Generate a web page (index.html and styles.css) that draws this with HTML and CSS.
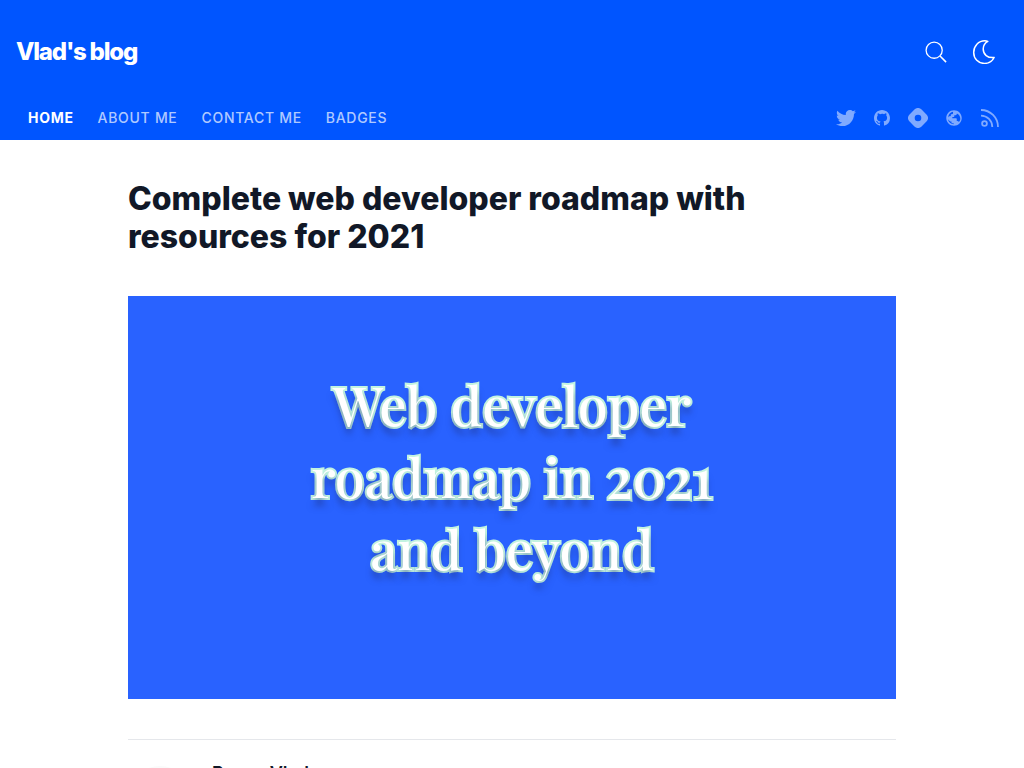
FILE: index.html
```html
<!DOCTYPE html>
<html lang="en">
<head>
<meta charset="utf-8">
<meta name="viewport" content="width=device-width, initial-scale=1">
<title>Complete web developer roadmap with resources for 2021</title>
<link rel="stylesheet" href="styles.css">
</head>
<body>
<header class="header">
  <div class="topbar">
    <a class="brand" href="#">Vlad's blog</a>
    <div class="actions">
      <button class="icon-button" type="button" aria-label="Search">
        <svg class="icon-search" viewBox="0 0 24 24" fill="none" stroke="currentColor" stroke-width="1.4"><circle cx="10" cy="10" r="8.8"/><path d="M16.400 16.400l6.600 6.600" stroke-width="1.7"/></svg>
      </button>
      <button class="icon-button" type="button" aria-label="Toggle theme">
        <svg class="icon-moon" viewBox="0 0 24 24" fill="none" stroke="currentColor" stroke-width="1.5" stroke-linejoin="round"><path d="M15.800 1.400C14.800.9 13.900.8 12.800.8 6.500.8 1.700 6 1.700 12.400c0 6.200 4.600 11 10.700 11 4.200 0 7.900-2.200 9.700-5.900C15.500 18.200 11.200 14.500 11.200 9c0-3.200 1.700-5.900 4.600-7.600z"/></svg>
      </button>
    </div>
  </div>
  <div class="navbar">
    <nav class="nav">
      <a class="nav-link active" href="#">Home</a>
      <a class="nav-link" href="#">About me</a>
      <a class="nav-link" href="#">Contact me</a>
      <a class="nav-link" href="#">Badges</a>
    </nav>
    <div class="social">
      <a class="social-link" href="#" aria-label="Twitter"><svg class="icon-large" viewBox="0 0 512 512"><path d="M459.37 151.716c.325 4.548.325 9.097.325 13.645 0 138.720-105.583 298.558-298.558 298.558-59.452 0-114.680-17.219-161.137-47.106 8.447.974 16.568 1.299 25.340 1.299 49.055 0 94.213-16.568 130.274-44.832-46.132-.975-84.792-31.188-98.112-72.772 6.498.974 12.995 1.624 19.818 1.624 9.421 0 18.843-1.300 27.614-3.573-48.081-9.747-84.143-51.980-84.143-102.985v-1.299c13.969 7.797 30.214 12.670 47.431 13.319-28.264-18.843-46.781-51.005-46.781-87.391 0-19.492 5.197-37.360 14.294-52.954 51.655 63.675 129.300 105.258 216.365 109.807-1.624-7.797-2.599-15.918-2.599-24.040 0-57.828 46.782-104.934 104.934-104.934 30.213 0 57.502 12.670 76.670 33.137 23.715-4.548 46.456-13.320 66.599-25.340-7.798 24.366-24.366 44.833-46.132 57.827 21.117-2.273 41.584-8.122 60.426-16.243-14.292 20.791-32.161 39.308-52.628 54.253z"/></svg></a>
      <a class="social-link" href="#" aria-label="GitHub"><svg class="icon-small" viewBox="0 0 16 16"><path d="M8 0C3.580 0 0 3.580 0 8c0 3.540 2.290 6.530 5.470 7.590.4.070.55-.17.55-.38 0-.19-.01-.82-.01-1.490-2.010.37-2.530-.49-2.690-.94-.09-.23-.48-.94-.82-1.130-.28-.15-.68-.52-.01-.53.630-.01 1.080.58 1.230.82.720 1.210 1.870.87 2.330.66.070-.52.280-.87.510-1.070-1.780-.2-3.640-.89-3.640-3.950 0-.87.310-1.590.820-2.150-.08-.2-.36-1.020.08-2.120 0 0 .67-.21 2.200.82A7.600 7.600 0 0 1 8 3.870c.68 0 1.360.09 2 .27 1.530-1.040 2.200-.82 2.200-.82.44 1.100.16 1.920.08 2.120.51.56.82 1.270.82 2.150 0 3.070-1.870 3.750-3.650 3.950.29.25.54.730.54 1.480 0 1.070-.01 1.930-.01 2.200 0 .21.150.46.550.38A8 8 0 0 0 16 8c0-4.420-3.580-8-8-8z"/></svg></a>
      <a class="social-link" href="#" aria-label="Hashnode"><svg class="icon-large" viewBox="0 0 20 20"><path fill-rule="evenodd" d="M1.300 6.700a4.700 4.700 0 0 0 0 6.600l5.400 5.400a4.700 4.700 0 0 0 6.600 0l5.400-5.400a4.700 4.700 0 0 0 0-6.600l-5.400-5.400a4.700 4.700 0 0 0-6.600 0zM10 6.700a3.300 3.300 0 1 1 0 6.600 3.300 3.300 0 0 1 0-6.600z"/></svg></a>
      <a class="social-link" href="#" aria-label="Website"><svg class="icon-small" viewBox="0 0 496 512"><path d="M248 8C111 8 0 119 0 256s111 248 248 248 248-111 248-248S385 8 248 8zm-11 445c-91-5-166-72-184-160l65 65c8 8 18 12 29 12h20v24c0 17 14 31 31 31h39zm167-72c-8-20-26-33-48-33h-20v-62c0-11-9-20-20-20H195v-41h41c11 0 20-9 20-20v-41h41c23 0 42-19 42-42v-8c65 27 111 91 111 166 0 39-17 74-46 101zM64 202c19-71 80-135 153-145v48c0 16-13 30-30 30h-40v42c0 11-9 20-20 20H86v42z"/></svg></a>
      <a class="social-link" href="#" aria-label="RSS"><svg class="icon-rss" viewBox="0 0 18 18" fill="none" stroke="currentColor" stroke-width="1.800"><circle cx="3.500" cy="14.500" r="2.400"/><path d="M0 6.600c6.200 0 11.300 5.100 11.300 11.400M0 1c9.400 0 17 7.600 17 17"/></svg></a>
    </div>
  </div>
</header>
<main class="article">
  <h1 class="title">Complete web developer roadmap with resources for 2021</h1>
  <div class="cover">
    <p class="cover-text">Web developer<br>roadmap in 2021<br>and beyond</p>
  </div>
  <section class="author">
    <span class="avatar"></span>
    <a class="author-name" href="#">Pascu Vlad</a>
  </section>
</main>
</body>
</html>
```
FILE: styles.css
```css
* { box-sizing: border-box; }
body {
  margin: 0;
  height: 100vh;
  overflow: hidden;
  background: #fff;
  color: #111827;
  font-family: Inter, "Liberation Sans", sans-serif;
}
a { color: inherit; text-decoration: none; }
svg { display: block; }
.header { background: #0055ff; color: #fff; padding: 24px 16px 0; }
.topbar { display: flex; align-items: center; justify-content: space-between; height: 56px; }
.brand { font-size: 24px; line-height: 32px; font-weight: 800; letter-spacing: -0.05em; }
.actions { display: flex; gap: 4px; margin-right: 2px; }
.icon-button {
  display: grid;
  place-items: center;
  width: 44px;
  height: 44px;
  padding: 0;
  border: 0;
  background: none;
  color: inherit;
}
.icon-search { width: 22px; height: 22px; }
.icon-moon { width: 24px; height: 24px; }
.navbar { display: flex; align-items: center; justify-content: space-between; height: 60px; padding-top: 16px; }
.nav { display: flex; }
.nav-link {
  padding: 8px 12px;
  color: rgba(255, 255, 255, .7);
  font-size: 14px;
  line-height: 20px;
  font-weight: 500;
  letter-spacing: 0.05em;
  text-transform: uppercase;
}
.nav-link.active { color: #fff; font-weight: 700; }
.social { display: flex; color: #80aaff; }
.social-link { display: grid; place-items: center; width: 36px; height: 36px; }
.social svg:not(.icon-rss) { fill: currentColor; }
.icon-large { width: 20px; height: 20px; }
.icon-small { width: 16px; height: 16px; }
.icon-rss { width: 18px; height: 18px; }
.article { width: 75%; margin: 0 auto; padding-top: 40px; }
.title { margin: 0 0 40px; font-size: 32px; line-height: 38px; font-weight: 800; }
.cover { display: grid; place-items: center; aspect-ratio: 768 / 403; background: #2962ff; }
.cover-text {
  margin: 0;
  padding-bottom: 42px;
  color: #fff;
  font-family: "Playfair Display", "Liberation Serif", serif;
  font-size: 54px;
  line-height: 72px;
  font-weight: 500;
  text-align: center;
  -webkit-text-stroke: 4px #c3f3e0;
  paint-order: stroke fill;
  text-shadow: 0 8px 6px rgba(30, 50, 130, .5);
}
.author { display: flex; align-items: flex-start; gap: 20px; margin-top: 40px; padding-top: 20px; border-top: 1px solid #e5e7eb; }
.avatar { width: 64px; height: 64px; margin-top: 6px; border-radius: 50%; background: #fafafa; }
.author-name { font-size: 18px; line-height: 28px; font-weight: 600; }
```
